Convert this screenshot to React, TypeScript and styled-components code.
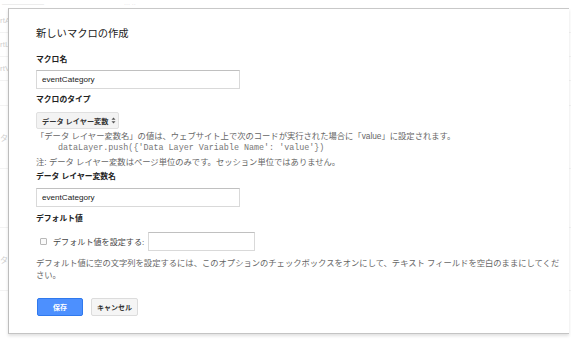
import React from 'react';
import styled, { createGlobalStyle } from 'styled-components';

const GlobalStyle = createGlobalStyle`
    html, body {
        margin: 0;
        padding: 0;
        background: #ffffff;
        overflow: hidden;
    }
    body {
        font-family: "Liberation Sans", "Noto Sans CJK JP", sans-serif;
    }
`;

const Page = styled.div`
    position: relative;
    width: 571px;
    height: 342px;
    overflow: hidden;
    background: #ffffff;
`;

const TopStrip = styled.div`
    height: 8px;
    display: flex;
    align-items: center;
    gap: 80px;
    padding-left: 2px;
    font-size: 6px;
    color: #d4d4d4;
    line-height: 8px;
    overflow: hidden;
`;

const BackRow = styled.div<{ $h: number }>`
    height: ${(p) => p.$h}px;
    display: flex;
    align-items: center;
    border-bottom: 1px solid #f3f3f3;
    font-size: 8px;
    color: #cfcfcf;
    overflow: hidden;
    white-space: nowrap;
`;

const Dialog = styled.div`
    position: absolute;
    left: 8px;
    top: 8px;
    width: 561px;
    box-sizing: border-box;
    background: #ffffff;
    border-top: 1px solid #c8c8c8;
    border-left: 1px solid #bdbdbd;
    border-bottom: 1px solid #c4c4c4;
    box-shadow: 0 2px 3px rgba(0, 0, 0, 0.12);
    padding: 18px 0 17px 27px;
    display: flex;
    flex-direction: column;
    color: #222;
`;

const Title = styled.div`
    font-size: 10.3px;
    line-height: 14px;
    color: #222;
`;

const Label = styled.div<{ $mt: number }>`
    margin-top: ${(p) => p.$mt}px;
    font-size: 7.8px;
    line-height: 10px;
    font-weight: bold;
    color: #222;
`;

const TextInput = styled.div<{ $mt?: number; $w: number }>`
    margin-top: ${(p) => p.$mt ?? 0}px;
    width: ${(p) => p.$w}px;
    height: 19px;
    box-sizing: border-box;
    border: 1px solid #d9d9d9;
    border-top-color: #c0c0c0;
    padding: 0 5px;
    display: flex;
    align-items: center;
    font-size: 8.1px;
    color: #222;
`;

const SelectButton = styled.div`
    margin-top: 7px;
    margin-bottom: 2px;
    width: 83px;
    height: 17px;
    box-sizing: border-box;
    border: 1px solid #e0e0e0;
    border-radius: 2px;
    background: #f3f3f3;
    display: flex;
    align-items: center;
    gap: 3px;
    padding-left: 5px;
    font-size: 7.2px;
    font-weight: bold;
    color: #333;
    white-space: nowrap;
`;

const Help = styled.div<{ $lh?: number; $w?: number; $mt?: number }>`
    margin-top: ${(p) => p.$mt ?? 0}px;
    font-size: 8.3px;
    line-height: ${(p) => p.$lh ?? 11}px;
    color: #666;
    width: ${(p) => (p.$w ? `${p.$w}px` : 'auto')};
    white-space: ${(p) => (p.$w ? 'normal' : 'nowrap')};
`;

const Code = styled.div`
    margin-left: 22px;
    font-family: "Liberation Mono", monospace;
    font-size: 8.4px;
    line-height: 12px;
    color: #777;
    white-space: pre;
    padding-bottom: 3px;
`;

const CheckRow = styled.div`
    margin-top: 8px;
    display: flex;
    align-items: center;
    padding-left: 4px;
`;

const CheckBox = styled.span`
    width: 7px;
    height: 7px;
    box-sizing: border-box;
    border: 1px solid #b8b8b8;
    border-radius: 1px;
    background: #fafafa;
    margin-right: 6px;
`;

const CheckLabel = styled.span`
    font-size: 8.1px;
    color: #444;
    margin-right: 4px;
    white-space: nowrap;
`;

const ButtonRow = styled.div`
    margin-top: 17px;
    display: flex;
    gap: 8px;
    padding-left: 1px;
`;

const Button = styled.div<{ $primary?: boolean }>`
    width: ${(p) => (p.$primary ? 46 : 47)}px;
    height: 18px;
    box-sizing: border-box;
    border: 1px solid ${(p) => (p.$primary ? '#3079ed' : '#dcdcdc')};
    border-radius: 2px;
    background: ${(p) => (p.$primary ? '#4d90fe' : '#f5f5f5')};
    color: ${(p) => (p.$primary ? '#ffffff' : '#333')};
    display: flex;
    align-items: center;
    justify-content: center;
    font-size: 7px;
    font-weight: bold;
`;

function UpDown(): React.ReactElement {
    return (
        <svg width="5" height="7" viewBox="0 0 5 7">
            <path d="M2.5 0.5 L4.5 2.8 H0.5 Z" fill="#555" />
            <path d="M2.5 6.5 L4.5 4.2 H0.5 Z" fill="#555" />
        </svg>
    );
}

export default function App(): React.ReactElement {
    return (
        <Page>
            <GlobalStyle />
            <TopStrip>
                <span>―――――――</span>
                <span>··· ··</span>
            </TopStrip>
            <BackRow $h={24}>rtA</BackRow>
            <BackRow $h={23}>rtL</BackRow>
            <BackRow $h={23}>rtV</BackRow>
            <BackRow $h={24}> </BackRow>
            <BackRow $h={62}>タ</BackRow>
            <BackRow $h={58}> </BackRow>
            <BackRow $h={62}>タ</BackRow>

            <Dialog>
                <Title>新しいマクロの作成</Title>
                <Label $mt={14}>マクロ名</Label>
                <TextInput $mt={5} $w={204}>eventCategory</TextInput>
                <Label $mt={6}>マクロのタイプ</Label>
                <SelectButton>
                    データ レイヤー変数 <UpDown />
                </SelectButton>
                <Help>「データ レイヤー変数名」の値は、ウェブサイト上で次のコードが実行された場合に「value」に設定されます。</Help>
                <Code>dataLayer.push({"{"}'Data Layer Variable Name': 'value'{"}"})</Code>
                <Help>注: データ レイヤー変数はページ単位のみです。セッション単位ではありません。</Help>
                <Label $mt={4}>データ レイヤー変数名</Label>
                <TextInput $mt={6} $w={204}>eventCategory</TextInput>
                <Label $mt={7}>デフォルト値</Label>
                <CheckRow>
                    <CheckBox />
                    <CheckLabel>デフォルト値を設定する:</CheckLabel>
                    <TextInput $w={107} />
                </CheckRow>
                <Help $lh={12} $w={527} $mt={6}>
                    デフォルト値に空の文字列を設定するには、このオプションのチェックボックスをオンにして、テキスト フィールドを空白のままにしてください。
                </Help>
                <ButtonRow>
                    <Button $primary>保存</Button>
                    <Button>キャンセル</Button>
                </ButtonRow>
            </Dialog>
        </Page>
    );
}
